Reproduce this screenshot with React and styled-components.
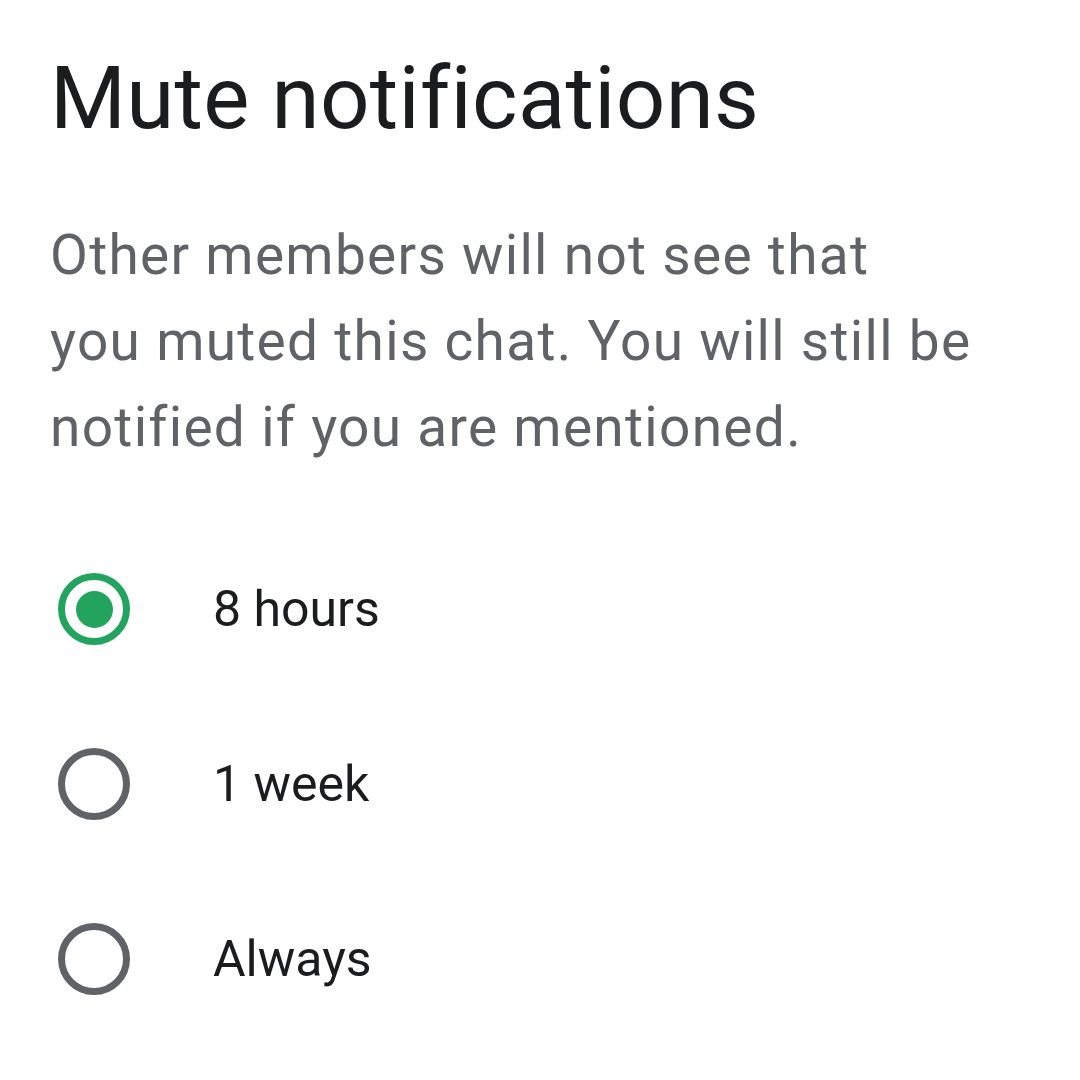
import React from "react";
import styled, { createGlobalStyle } from "styled-components";

const Global = createGlobalStyle`
  html, body { margin: 0; padding: 0; background: #ffffff; }
  body { font-family: Roboto, "Noto Sans", sans-serif; }
`;

const Dialog = styled.div`
  width: 1080px;
  height: 1080px;
  box-sizing: border-box;
  padding: 48px 0 0 50px;
  background: #fff;
  display: flex;
  flex-direction: column;
`;

const Title = styled.h1`
  margin: 0;
  font-family: Roboto, sans-serif;
  font-weight: 400;
  font-size: 87px;
  line-height: 100px;
  color: #1b1c1e;
  letter-spacing: 0.3px;
`;

const Body = styled.p`
  margin: 64px 0 0 0;
  font-family: Roboto, sans-serif;
  font-size: 55px;
  line-height: 86px;
  color: #5f6367;
  letter-spacing: 1.3px;
  white-space: nowrap;
`;

const Options = styled.div`
  margin-top: 103px;
  display: flex;
  flex-direction: column;
  gap: 103px;
`;

const Row = styled.label`
  display: flex;
  align-items: center;
  height: 72px;
`;

const Radio = styled.span`
  box-sizing: border-box;
  width: 72px;
  height: 72px;
  margin-left: 8px;
  border-radius: 50%;
  border: 7px solid ${(p) => (p.$checked ? "#22a45f" : "#5f6266")};
  display: flex;
  align-items: center;
  justify-content: center;
  flex: none;
  &::after {
    content: "";
    width: 37px;
    height: 37px;
    border-radius: 50%;
    background: #22a45f;
    display: ${(p) => (p.$checked ? "block" : "none")};
  }
`;

const Label = styled.span`
  margin-left: 83px;
  font-family: Roboto, sans-serif;
  font-size: 50px;
  color: #1b1c1e;
`;

const options = [
  { label: "8 hours", checked: true },
  { label: "1 week", checked: false },
  { label: "Always", checked: false },
];

export default function App() {
  return (
    <>
      <Global />
      <Dialog>
        <Title>Mute notifications</Title>
        <Body>
          Other members will not see that
          <br />
          you muted this chat. You will still be
          <br />
          notified if you are mentioned.
        </Body>
        <Options>
          {options.map((o) => (
            <Row key={o.label}>
              <Radio $checked={o.checked} />
              <Label>{o.label}</Label>
            </Row>
          ))}
        </Options>
      </Dialog>
    </>
  );
}
